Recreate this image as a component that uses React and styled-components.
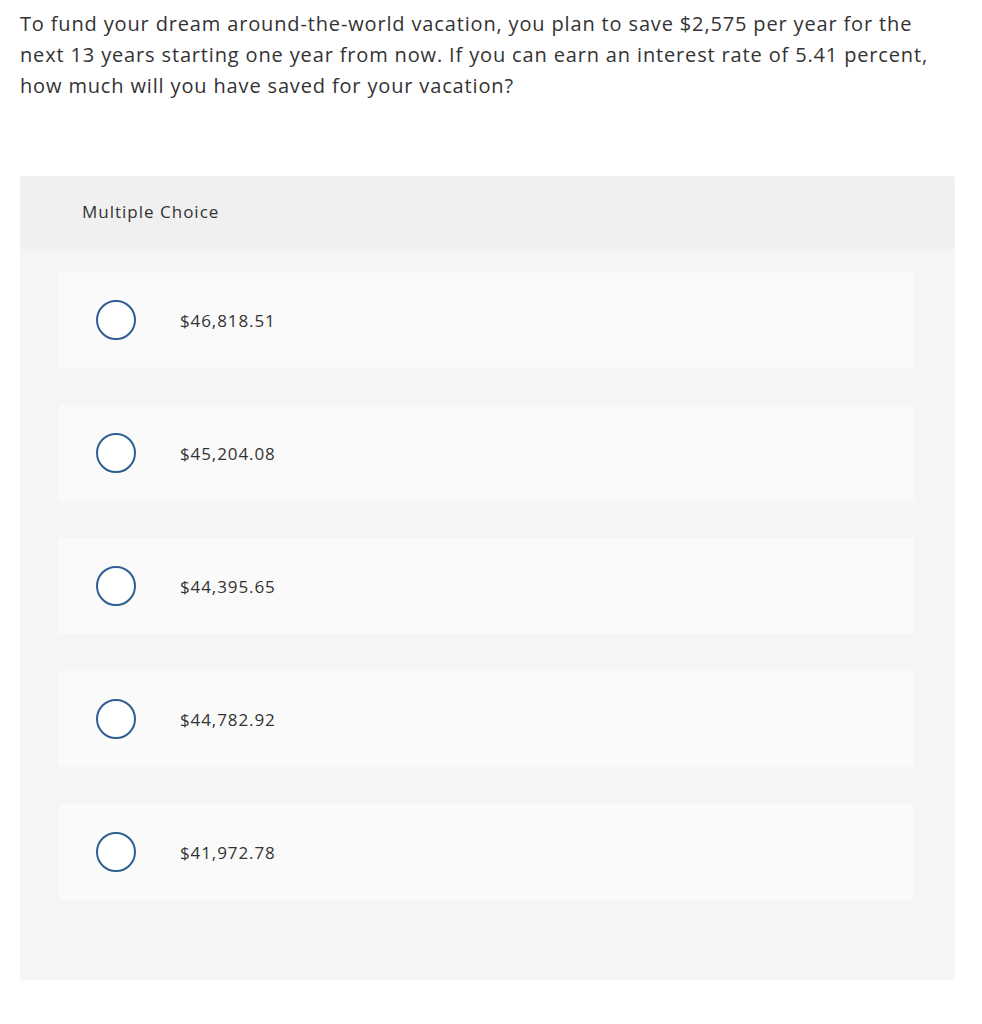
import React from "react";
import styled, { createGlobalStyle } from "styled-components";

const Global = createGlobalStyle`
  html, body { margin: 0; padding: 0; background: #ffffff; }
  body { font-family: "Open Sans", "Lato", sans-serif; color: #333333; }
`;

const Page = styled.div`
  padding: 8px 27px 40px 20px;
  width: 935px;
`;

const Question = styled.p`
  margin: 0;
  font-size: 20px;
  letter-spacing: 0.85px;
  line-height: 31px;
  color: #333333;
  white-space: nowrap;
`;

const Panel = styled.section`
  margin-top: 75px;
  background: #f5f5f5;
  border-radius: 4px;
  overflow: hidden;
`;

const PanelHeader = styled.div`
  background: #f0f0f0;
  height: 71px;
  display: flex;
  align-items: center;
  padding: 0 0 2px 62px;
  font-size: 17px;
  letter-spacing: 1px;
  color: #333333;
`;

const Choices = styled.div`
  display: flex;
  flex-direction: column;
  gap: 37px;
  padding: 23px 41px 80px 38px;
`;

const Choice = styled.label`
  display: flex;
  align-items: center;
  height: 96px;
  background: #fafafa;
  border-radius: 4px;
  padding-left: 38px;
  cursor: pointer;
`;

const Radio = styled.span`
  width: 36px;
  height: 36px;
  border: 2px solid #2f5e92;
  border-radius: 50%;
  background: #ffffff;
  flex: none;
`;

const Amount = styled.span`
  margin-left: 44px;
  font-size: 17px;
  letter-spacing: 0.9px;
  color: #333333;
`;

const options = ["$46,818.51", "$45,204.08", "$44,395.65", "$44,782.92", "$41,972.78"];

export default function App() {
  return (
    <>
      <Global />
      <Page>
        <Question>
          To fund your dream around-the-world vacation, you plan to save $2,575 per year for the
          <br />
          next 13 years starting one year from now. If you can earn an interest rate of 5.41 percent,
          <br />
          how much will you have saved for your vacation?
        </Question>
        <Panel>
          <PanelHeader>Multiple Choice</PanelHeader>
          <Choices>
            {options.map((o) => (
              <Choice key={o}>
                <Radio />
                <Amount>{o}</Amount>
              </Choice>
            ))}
          </Choices>
        </Panel>
      </Page>
    </>
  );
}
